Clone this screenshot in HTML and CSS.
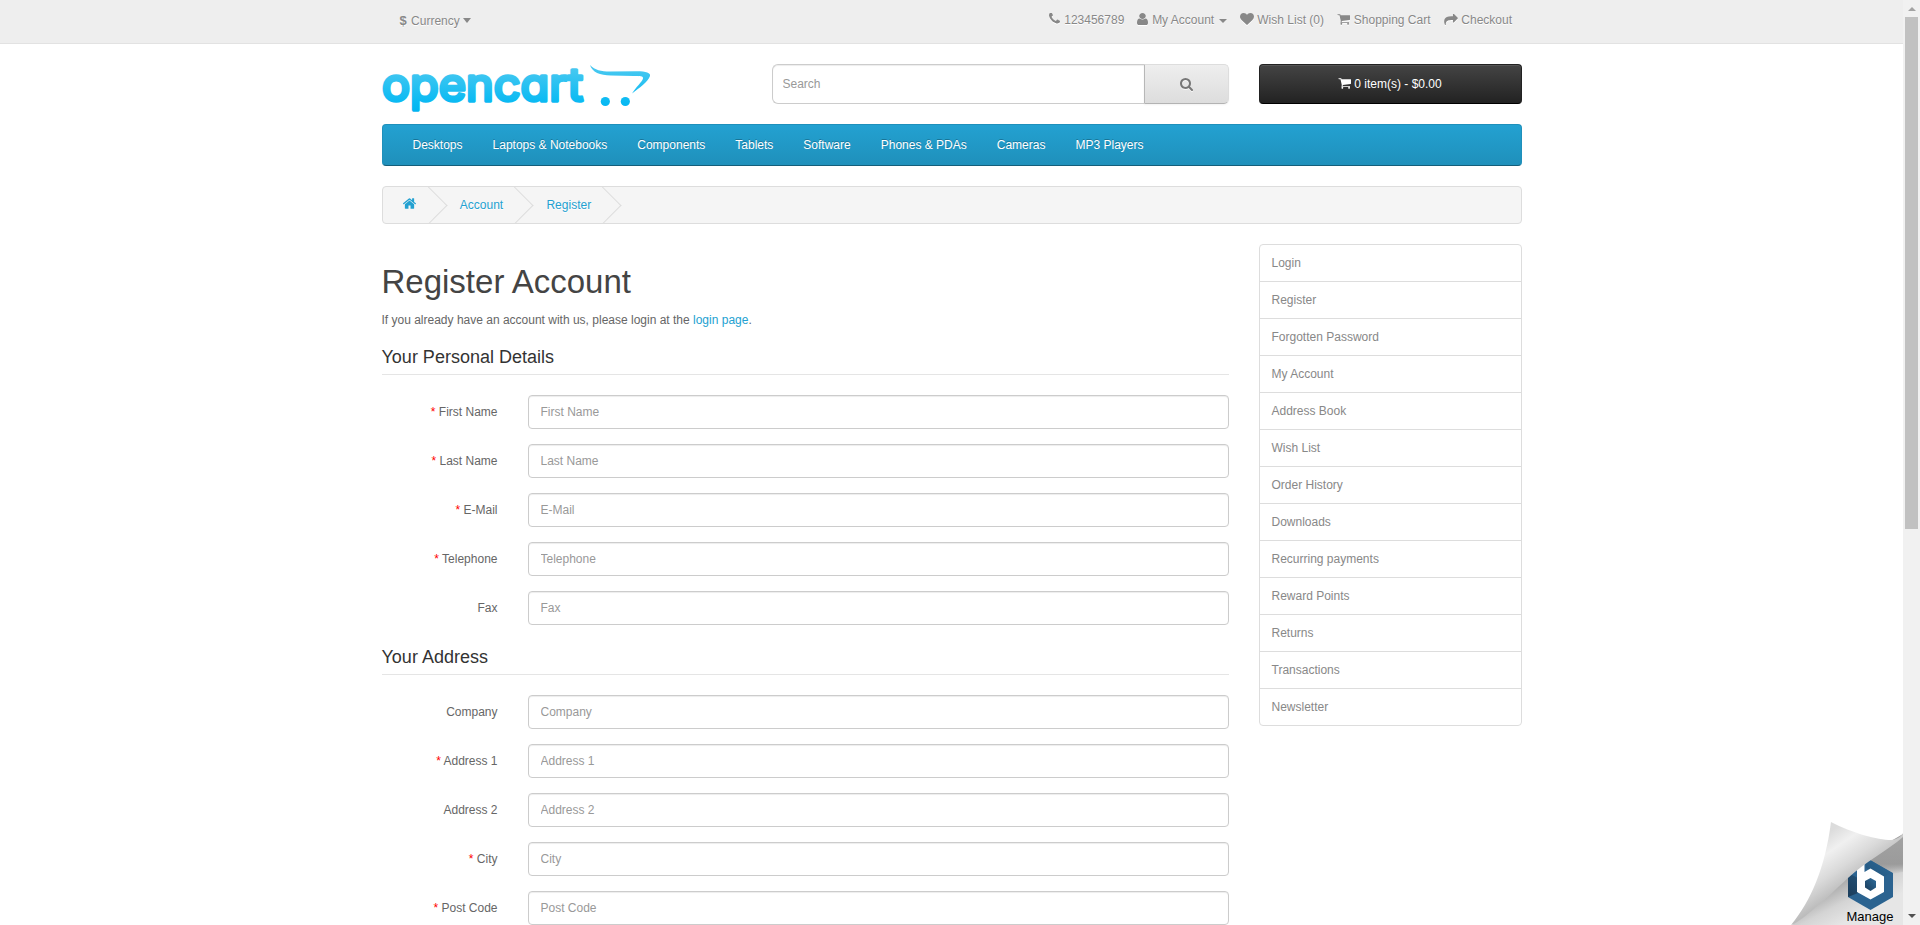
FILE: index.html
```html
<!DOCTYPE html>
<html lang="en">
<head>
<meta charset="utf-8">
<title>Register Account</title>
<link rel="stylesheet" href="styles.css">
</head>
<body>
<svg class="defs" width="0" height="0">
  <symbol id="cart" viewBox="0 128 1728 1536"><path d="M704 1536q0 52-38 90t-90 38-90-38-38-90 38-90 90-38 90 38 38 90zm896 0q0 52-38 90t-90 38-90-38-38-90 38-90 90-38 90 38 38 90zm128-1088v512q0 24-16.500 42.500t-40.500 21.500l-1044 122q13 60 13 70 0 16-24 64h920q26 0 45 19t19 45-19 45-45 19h-1024q-26 0-45-19t-19-45q0-11 8-31.500t16-36 21.500-40 15.500-29.500l-177-823h-204q-26 0-45-19t-19-45 19-45 45-19h256q16 0 28.500 6.500t19.500 15.500 13 24.500 8 26 5.500 29.500 4.500 26h1201q26 0 45 19t19 45z"/></symbol>
</svg>
<div class="window">
<div class="page">
  <nav class="top">
    <div class="container top-row">
      <div class="currency"><strong>$</strong> Currency <i class="caret caret-lg"></i></div>
      <ul class="top-links">
        <li><svg class="icon i-phone" viewBox="192 192 1408 1408"><path d="M1600 1240q0 27-10 70.500t-21 68.500q-21 50-122 106-94 51-186 51-27 0-53-3.500t-57.500-12.500-47-14.500-55.500-20.500-49-18q-98-35-175-83-127-79-264-216t-216-264q-48-77-83-175-3-9-18-49t-20.500-55.500-14.500-47-12.500-57.500-3.500-53q0-92 51-186 56-101 106-122 25-11 68.500-21t70.500-10q14 0 21 3 18 6 53 76 11 19 30 54t35 63.500 31 53.500q3 4 17.500 25t21.500 35.500 7 28.500q0 20-28.500 50t-62 55-62 53-28.500 46q0 9 5 22.500t8.500 20.500 14 24 11.500 19q76 137 174 235t235 174q2 1 19 11.500t24 14 20.500 8.500 22.500 5q18 0 46-28.500t53-62 55-62 50-28.500q14 0 28.500 7t35.500 21.500 25 17.500q25 15 53.500 31t63.500 35 54 30q70 35 76 53 3 7 3 21z"/></svg>123456789</li>
        <li><svg class="icon i-user" preserveAspectRatio="none" viewBox="256 128 1280 1536"><path d="M1536 1399q0 109-62.500 187t-150.500 78h-854q-88 0-150.500-78t-62.500-187q0-85 8.500-160.500t31.500-152 58.500-131 94-89 134.500-34.500q131 128 313 128t313-128q76 0 134.500 34.500t94 89 58.500 131 31.500 152 8.500 160.500zm-256-887q0 159-112.500 271.500t-271.500 112.500-271.500-112.500-112.500-271.500 112.500-271.500 271.500-112.500 271.500 112.500 112.500 271.500z"/></svg>My Account <i class="caret"></i></li>
        <li><svg class="icon i-heart" viewBox="0 128 1792 1536"><path d="M896 1664q-26 0-44-18l-624-602q-10-8-27.500-26t-55.500-65.500-68-97.500-53.500-121-23.500-138q0-220 127-344t351-124q62 0 126.500 21.500t120 58 95.500 68.500 76 68q36-36 76-68t95.500-68.500 120-58 126.500-21.500q224 0 351 124t127 344q0 221-229 450l-623 600q-18 18-44 18z"/></svg>Wish List (0)</li>
        <li><svg class="icon i-cart"><use href="#cart"/></svg>Shopping Cart</li>
        <li><svg class="icon i-share" viewBox="0 100 1792 1436"><path d="M1792 640q0 26-19 45l-512 512q-19 19-45 19t-45-19-19-45v-256h-224q-98 0-175.500 6t-154 21.500-133 42.500-105.500 69.500-80 101-48.500 138.500-17.500 181q0 55 5 123 0 6 2.500 23.500t2.500 26.500q0 15-8.500 25t-23.500 10q-16 0-28-17-7-9-13-22t-13.500-30-10.500-24q-127-285-127-451 0-199 53-333 162-403 875-403h224v-256q0-26 19-45t45-19 45 19l512 512q19 19 19 45z"/></svg>Checkout</li>
      </ul>
    </div>
  </nav>

  <header class="container header">
    <svg class="logo" width="270" height="58" viewBox="0 -4 270 58">
      <defs><linearGradient id="brand" gradientUnits="userSpaceOnUse" x1="0" y1="2" x2="0" y2="48"><stop offset="0" stop-color="#4cc9f0"/><stop offset=".78" stop-color="#0abaf3"/><stop offset="1" stop-color="#00b4f0"/></linearGradient></defs>
      <text class="logo-text" x="0" y="37" textLength="201" lengthAdjust="spacingAndGlyphs">opencart</text>
      <path fill="url(#brand)" d="M208 1 C213 6 219 7.500 228 7.500 L255 7.200 C264 7.300 269 9 268 12 C266 18 257 24 250 29.500 C254 23 260 18 261 14.500 C261.500 12 258 12 252 12 L229 11.500 C218 11.500 210 8 208 1Z"/>
      <circle cx="223.300" cy="37.500" r="4.600" fill="url(#brand)"/><circle cx="243.300" cy="37.500" r="4.600" fill="url(#brand)"/>
    </svg>
    <div class="search"><input type="text" placeholder="Search"><button class="search-btn"><svg class="i-search" viewBox="64 128 1664 1664"><path d="M1216 832q0-185-131.500-316.500t-316.500-131.500-316.500 131.500-131.500 316.500 131.500 316.500 316.500 131.500 316.500-131.500 131.500-316.500zm512 832q0 52-38 90t-90 38q-54 0-90-38l-343-342q-179 124-399 124-143 0-273.500-55.500t-225-150-150-225-55.500-273.500 55.500-273.500 150-225 225-150 273.500-55.500 273.500 55.500 225 150 150 225 55.500 273.500q0 220-124 399l343 343q37 37 37 90z"/></svg></button></div>
    <button class="cart-btn"><svg class="icon i-cart"><use href="#cart"/></svg>0 item(s) - $0.00</button>
  </header>

  <div class="container">
    <nav class="menu"><a>Desktops</a><a>Laptops &amp; Notebooks</a><a>Components</a><a>Tablets</a><a>Software</a><a>Phones &amp; PDAs</a><a>Cameras</a><a>MP3 Players</a></nav>
    <ul class="breadcrumb">
      <li><svg class="i-home" viewBox="89 253 1614 1283"><path d="M1472 992v480q0 26-19 45t-45 19h-384v-384h-256v384h-384q-26 0-45-19t-19-45v-480q0-1 .5-3t.5-3l575-474 575 474q1 2 1 6zm223-69l-62 74q-8 9-21 11h-3q-13 0-21-7l-692-577-692 577q-12 8-24 7-13-2-21-11l-62-74q-8-10-7-23.500t11-21.500l719-599q32-26 76-26t76 26l244 204v-195q0-14 9-23t23-9h192q14 0 23 9t9 23v408l219 182q10 8 11 21.500t-7 23.500z"/></svg></li>
      <li>Account</li>
      <li>Register</li>
    </ul>
  </div>

  <div class="container columns">
    <main class="content">
      <h1>Register Account</h1>
      <p>If you already have an account with us, please login at the <a>login page</a>.</p>
      <form>
        <section class="group">
          <h2>Your Personal Details</h2>
          <div class="field"><label class="required">First Name</label><input type="text" placeholder="First Name"></div>
          <div class="field"><label class="required">Last Name</label><input type="text" placeholder="Last Name"></div>
          <div class="field"><label class="required">E-Mail</label><input type="text" placeholder="E-Mail"></div>
          <div class="field"><label class="required">Telephone</label><input type="text" placeholder="Telephone"></div>
          <div class="field"><label>Fax</label><input type="text" placeholder="Fax"></div>
        </section>
        <section class="group">
          <h2>Your Address</h2>
          <div class="field"><label>Company</label><input type="text" placeholder="Company"></div>
          <div class="field"><label class="required">Address 1</label><input type="text" placeholder="Address 1"></div>
          <div class="field"><label>Address 2</label><input type="text" placeholder="Address 2"></div>
          <div class="field"><label class="required">City</label><input type="text" placeholder="City"></div>
          <div class="field"><label class="required">Post Code</label><input type="text" placeholder="Post Code"></div>
        </section>
      </form>
    </main>
    <aside class="sidebar"><a>Login</a><a>Register</a><a>Forgotten Password</a><a>My Account</a><a>Address Book</a><a>Wish List</a><a>Order History</a><a>Downloads</a><a>Recurring payments</a><a>Reward Points</a><a>Returns</a><a>Transactions</a><a>Newsletter</a></aside>
  </div>

  <svg class="curl" width="113" height="105" viewBox="0 0 113 105">
    <defs>
      <linearGradient id="fold" gradientUnits="userSpaceOnUse" x1="35" y1="15" x2="66" y2="60"><stop offset="0" stop-color="#dcdcdc"/><stop offset=".3" stop-color="#f0f0f0"/><stop offset=".65" stop-color="#dadada"/><stop offset="1" stop-color="#bcbcbc"/></linearGradient>
      <linearGradient id="under" gradientUnits="userSpaceOnUse" x1="60" y1="52" x2="80" y2="90"><stop offset="0" stop-color="#a0a0a0"/><stop offset=".55" stop-color="#d4d4d4"/><stop offset="1" stop-color="#e6e6e6"/></linearGradient>
      <linearGradient id="shade" x1="0" y1="0" x2="0" y2="1"><stop offset="0" stop-color="#a2a2a2"/><stop offset=".75" stop-color="#9b9b9b"/><stop offset="1" stop-color="#9b9b9b" stop-opacity="0"/></linearGradient>
      <linearGradient id="hexDark" x1="0" y1="1" x2="1" y2="0"><stop offset="0" stop-color="#1b3c59"/><stop offset="1" stop-color="#2d6c9c"/></linearGradient>
    </defs>
    <path fill="url(#under)" d="M2 105 C14 92 24 76 30 62 L113 14 V105Z"/>
    <path fill="url(#shade)" d="M113 14 L80 40 L102 54 L113 52Z"/>
    <path fill="#2b6390" d="M80 40 L103 53 V77 L80.500 90 L58 77 V53Z"/>
    <path fill="url(#hexDark)" d="M80 40 L102 53 L93 57 L76 48 V41ZM58 53 L68 58 V73 L58 77Z"/>
    <path fill="#fff" d="M67 44 L74.500 42 V52 L80.500 48.500 L94 56.500 V72 L80.500 79.500 L67 72Z"/>
    <path fill="url(#hexDark)" d="M80.500 58 L86 61 V67.500 L80.500 71 L75 67.500 V61Z"/>
    <path fill="url(#fold)" d="M41 2 C62 13 88 20 101 20 C107 19.500 111 17 113 13 V17 C98 30 74 43 58 58 C45 70 35 80 26 87 C18 94 9 102 1 105 C21 81 35 48 41 2Z"/>
    <text class="curl-text" x="56.500" y="100.500">Manage</text>
  </svg>
</div>
<div class="scrollbar"><i class="arrow-up"></i><div class="thumb"></div><i class="arrow-down"></i></div>
</div>
</body>
</html>
```
FILE: styles.css
```css
* { box-sizing: border-box; }
body { margin: 0; font: 12px/20px "Liberation Sans", Arial, sans-serif; color: #666; background: #fff; overflow: hidden; }
ul { list-style: none; margin: 0; padding: 0; }
input, button { font: inherit; }
.defs { position: absolute; }
.window { display: flex; width: 1920px; height: 925px; overflow: hidden; }
.page { position: relative; width: 1903px; height: 925px; overflow: hidden; }
.container { width: 1140px; margin: 0 auto; }

.top { height: 44px; background: #eee; border-bottom: 1px solid #e2e2e2; color: #888; text-shadow: 0 1px 0 #fff; }
.top-row { display: flex; justify-content: space-between; padding: 10px 9.500px 0 18px; }
.currency { padding-top: 1px; }
.currency strong { font-size: 13px; margin-right: 1px; }
.caret { display: inline-block; border: 4px solid transparent; border-top-color: #888; border-bottom: 0; margin-left: 1px; vertical-align: 1px; }
.caret-lg { margin-left: 0; vertical-align: 2px; border-top-width: 5px; }
.top-links { display: flex; gap: 13px; }
.icon { fill: currentColor; vertical-align: -1px; margin-right: 3.800px; }
.top .icon { filter: drop-shadow(0 1px 0 #fff); }
.i-phone { width: 11px; height: 11px; vertical-align: 0; margin-right: 4px; }
.i-user { width: 11px; height: 12px; }
.i-heart { width: 14px; height: 12px; }
.i-cart { width: 13px; height: 12px; }
.i-share { width: 14px; height: 11px; }

.header { display: flex; align-items: flex-start; height: 80px; padding-top: 20px; }
.logo { flex: none; margin: -4px 120px 0 0; overflow: visible; }
.logo-text { font: 400 46px Inter, sans-serif; font-feature-settings: "cv11"; fill: url(#brand); stroke: url(#brand); stroke-width: 3.600px; stroke-linejoin: round; }
.search { display: flex; width: 457px; height: 40px; }
.search input { width: 372px; height: 40px; padding: 0 10px; border: 1px solid #ccc; border-right: 0; border-radius: 6px 0 0 6px; outline: 0; box-shadow: inset 0 1px 1px rgba(0,0,0,.075); }
.search-btn { width: 85px; height: 40px; padding: 2px 0 0; border: 1px solid; border-color: #ddd #ddd #b3b3b3 #b7b7b7; border-radius: 0 5px 5px 0; background: linear-gradient(#eee, #ddd); box-shadow: 0 1px 2px rgba(0,0,0,.05); }
.i-search { width: 13px; height: 13px; fill: #777; vertical-align: -2px; filter: drop-shadow(0 1px 0 rgba(255,255,255,.7)); }
.cart-btn { width: 263px; height: 40px; margin-left: 30px; padding: 0; color: #fff; border: 1px solid; border-color: #222 #222 #000; border-radius: 4px; background: linear-gradient(#444, #222); box-shadow: inset 0 1px 0 #555; }
.cart-btn .icon { margin-right: 3px; }

.menu { display: flex; height: 42px; padding: 10px 15px; border: 1px solid; border-color: #1f90bb #1f90bb #145e7a; border-radius: 4px; background: linear-gradient(#23a1d1, #1f90bb); color: #fff; text-shadow: 0 -1px 0 rgba(0,0,0,.25); }
.menu a { padding: 0 15px; }
.breadcrumb { display: flex; gap: 3.300px; height: 38px; margin: 20px 0; border: 1px solid #ddd; border-radius: 4px; background: #f5f5f5; color: #23a1d1; overflow: hidden; }
.breadcrumb li { position: relative; padding: 8px 20px; text-shadow: 0 1px 0 #fff; white-space: nowrap; }
.breadcrumb li::after { content: ""; position: absolute; top: 5px; right: -5px; width: 26px; height: 26px; border: 1px solid #ddd; border-top: 0; border-left: 0; transform: rotate(-45deg); }
.i-home { width: 13px; height: 11px; margin-right: 1px; fill: currentColor; }

.columns { display: flex; gap: 30px; align-items: flex-start; }
.content { width: 847px; }
h1 { margin: 20px 0 10px; font-size: 33px; font-weight: 400; line-height: 36px; color: #444; }
p { margin: 0 0 10px; }
p a { color: #23a1d1; }
h2 { height: 35px; margin: 0 0 20px; padding: 7px 0 0; border-bottom: 1px solid #e5e5e5; font-size: 18px; font-weight: 400; line-height: 20px; color: #333; }
.field { display: flex; height: 34px; margin-bottom: 15px; }
.field label { width: 146px; padding: 7px 30px 0 0; text-align: right; }
.required::before { content: "* "; color: #f00; }
.field input { width: 701px; height: 34px; padding: 6px 12px; border: 1px solid #ccc; border-radius: 4px; outline: 0; box-shadow: inset 0 1px 1px rgba(0,0,0,.075); }
input::placeholder { color: #999; opacity: 1; }
.sidebar { width: 263px; border: 1px solid #ddd; border-radius: 4px; color: #888; }
.sidebar a { display: block; height: 37px; padding: 8px 12px; border-bottom: 1px solid #ddd; }
.sidebar a:last-child { height: 36px; border: 0; }

.curl { position: absolute; right: 0; bottom: 0; }
.curl-text { font: 13px "Liberation Sans", Arial, sans-serif; fill: #000; }
.scrollbar { display: flex; flex-direction: column; align-items: center; width: 17px; height: 925px; padding: 7px 0; background: #f1f1f1; }
.arrow-up { border: 4px solid transparent; border-top: 0; border-bottom-color: #a3a3a3; }
.arrow-down { margin-top: auto; border: 4px solid transparent; border-bottom: 0; border-top-color: #505050; }
.thumb { width: 13px; height: 512px; margin-top: 6px; background: #c1c1c1; }
```
